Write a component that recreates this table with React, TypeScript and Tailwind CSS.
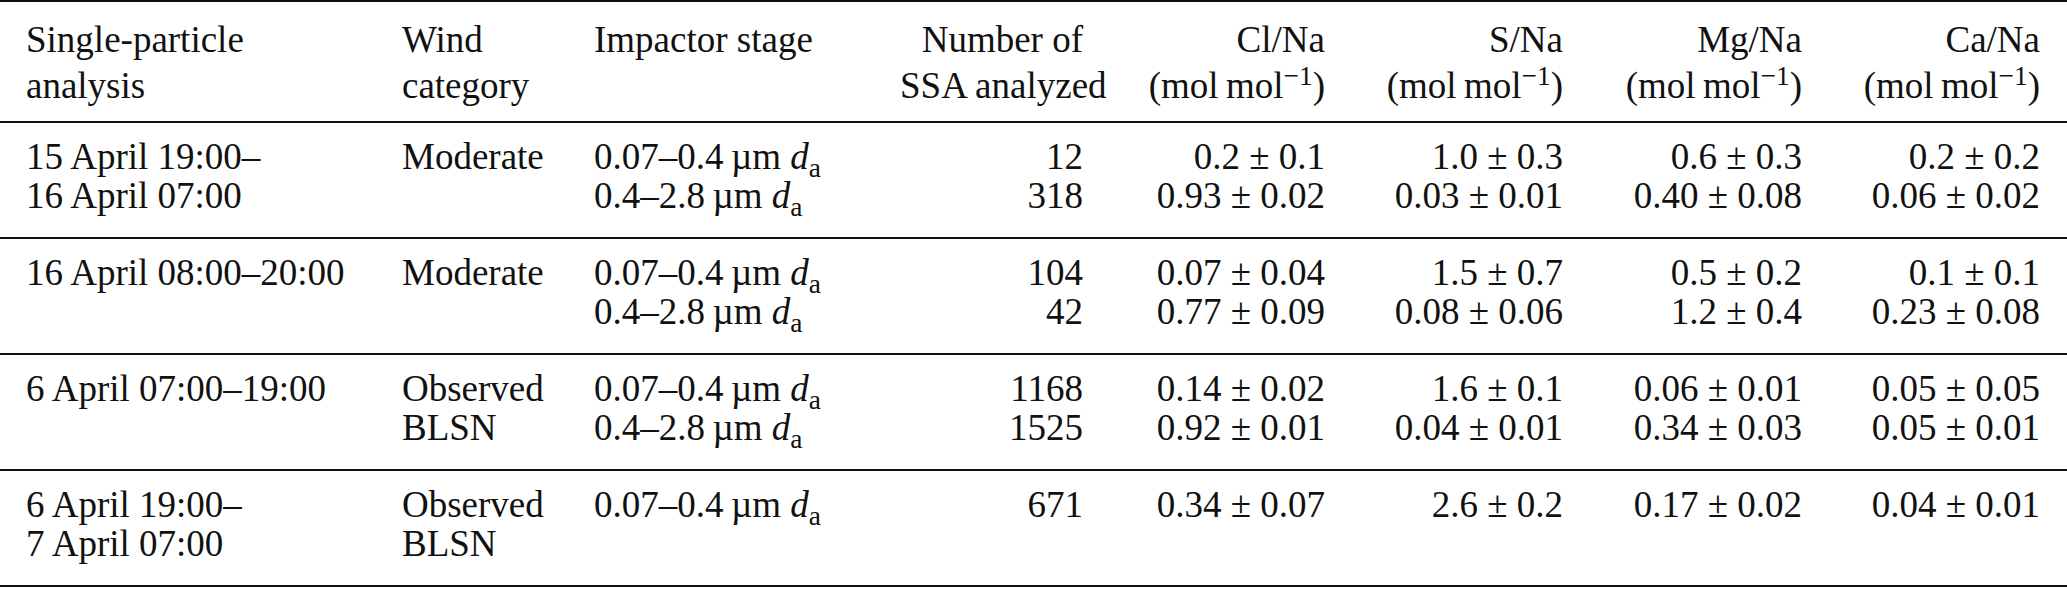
import React from "react";

// --- Data ---

type Row = {
  period: string[];
  wind: string[];
  stages: string[];
  count: string[];
  cl: string[];
  s: string[];
  mg: string[];
  ca: string[];
};

const ROWS: Row[] = [
  {
    period: ["15 April 19:00–", "16 April 07:00"],
    wind: ["Moderate"],
    stages: ["0.07–0.4", "0.4–2.8"],
    count: ["12", "318"],
    cl: ["0.2 ± 0.1", "0.93 ± 0.02"],
    s: ["1.0 ± 0.3", "0.03 ± 0.01"],
    mg: ["0.6 ± 0.3", "0.40 ± 0.08"],
    ca: ["0.2 ± 0.2", "0.06 ± 0.02"],
  },
  {
    period: ["16 April 08:00–20:00"],
    wind: ["Moderate"],
    stages: ["0.07–0.4", "0.4–2.8"],
    count: ["104", "42"],
    cl: ["0.07 ± 0.04", "0.77 ± 0.09"],
    s: ["1.5 ± 0.7", "0.08 ± 0.06"],
    mg: ["0.5 ± 0.2", "1.2 ± 0.4"],
    ca: ["0.1 ± 0.1", "0.23 ± 0.08"],
  },
  {
    period: ["6 April 07:00–19:00"],
    wind: ["Observed", "BLSN"],
    stages: ["0.07–0.4", "0.4–2.8"],
    count: ["1168", "1525"],
    cl: ["0.14 ± 0.02", "0.92 ± 0.01"],
    s: ["1.6 ± 0.1", "0.04 ± 0.01"],
    mg: ["0.06 ± 0.01", "0.34 ± 0.03"],
    ca: ["0.05 ± 0.05", "0.05 ± 0.01"],
  },
  {
    period: ["6 April 19:00–", "7 April 07:00"],
    wind: ["Observed", "BLSN"],
    stages: ["0.07–0.4"],
    count: ["671"],
    cl: ["0.34 ± 0.07"],
    s: ["2.6 ± 0.2"],
    mg: ["0.17 ± 0.02"],
    ca: ["0.04 ± 0.01"],
  },
];

const RATIOS = ["Cl/Na", "S/Na", "Mg/Na", "Ca/Na"];

// --- Pieces ---

const GRID =
  "grid grid-cols-[402px_192px_306px_183px_242px_238px_239px_265px] border-t-2 border-[#111]";

const Lines = ({ lines, className = "" }: { lines: React.ReactNode[]; className?: string }) => (
  <div className={className}>
    {lines.map((l, i) => (
      <div key={i} className="h-[39px] leading-[39px] whitespace-nowrap">
        {l}
      </div>
    ))}
  </div>
);

const Stage = ({ range }: { range: string }) => (
  <span>
    {range}
    {"\u2009"}µm <i>d</i>
    <span className="relative top-[0.28em] text-[0.74em] leading-none">a</span>
  </span>
);

const Unit = () => (
  <span>
    (mol{"\u2009"}mol
    <span className="relative -top-[0.48em] text-[0.74em] leading-none">−1</span>)
  </span>
);

export default function App() {
  return (
    <div className="min-h-screen bg-white text-[#111] font-['Liberation_Serif','Times_New_Roman',serif] text-[37px]">
      {/* header */}
      <div className={`${GRID} pt-[15px] pb-[12px]`}>
        <div className="pl-[26px] [&>div]:h-[46px] [&>div]:leading-[46px]">
          <div>Single-particle</div>
          <div>analysis</div>
        </div>
        <div className="[&>div]:h-[46px] [&>div]:leading-[46px]">
          <div>Wind</div>
          <div>category</div>
        </div>
        <div className="h-[46px] leading-[46px] whitespace-nowrap">Impactor stage</div>
        <div className="text-right whitespace-nowrap [&>div]:h-[46px] [&>div]:leading-[46px]">
          <div>Number of</div>
          <div>SSA analyzed</div>
        </div>
        {RATIOS.map((r, i) => (
          <div
            key={r}
            className={`text-right whitespace-nowrap [&>div]:h-[46px] [&>div]:leading-[46px] ${
              i === RATIOS.length - 1 ? "pr-[27px]" : ""
            }`}
          >
            <div>{r}</div>
            <div>
              <Unit />
            </div>
          </div>
        ))}
      </div>

      {/* body */}
      {ROWS.map((row, idx) => (
        <div
          key={idx}
          className={`${GRID} pt-[14px] pb-[22px] ${idx === ROWS.length - 1 ? "border-b-2" : ""}`}
        >
          <Lines lines={row.period} className="pl-[26px]" />
          <Lines lines={row.wind} />
          <Lines lines={row.stages.map((s) => <Stage key={s} range={s} />)} />
          <Lines lines={row.count} className="text-right" />
          <Lines lines={row.cl} className="text-right" />
          <Lines lines={row.s} className="text-right" />
          <Lines lines={row.mg} className="text-right" />
          <Lines lines={row.ca} className="text-right pr-[27px]" />
        </div>
      ))}
    </div>
  );
}
